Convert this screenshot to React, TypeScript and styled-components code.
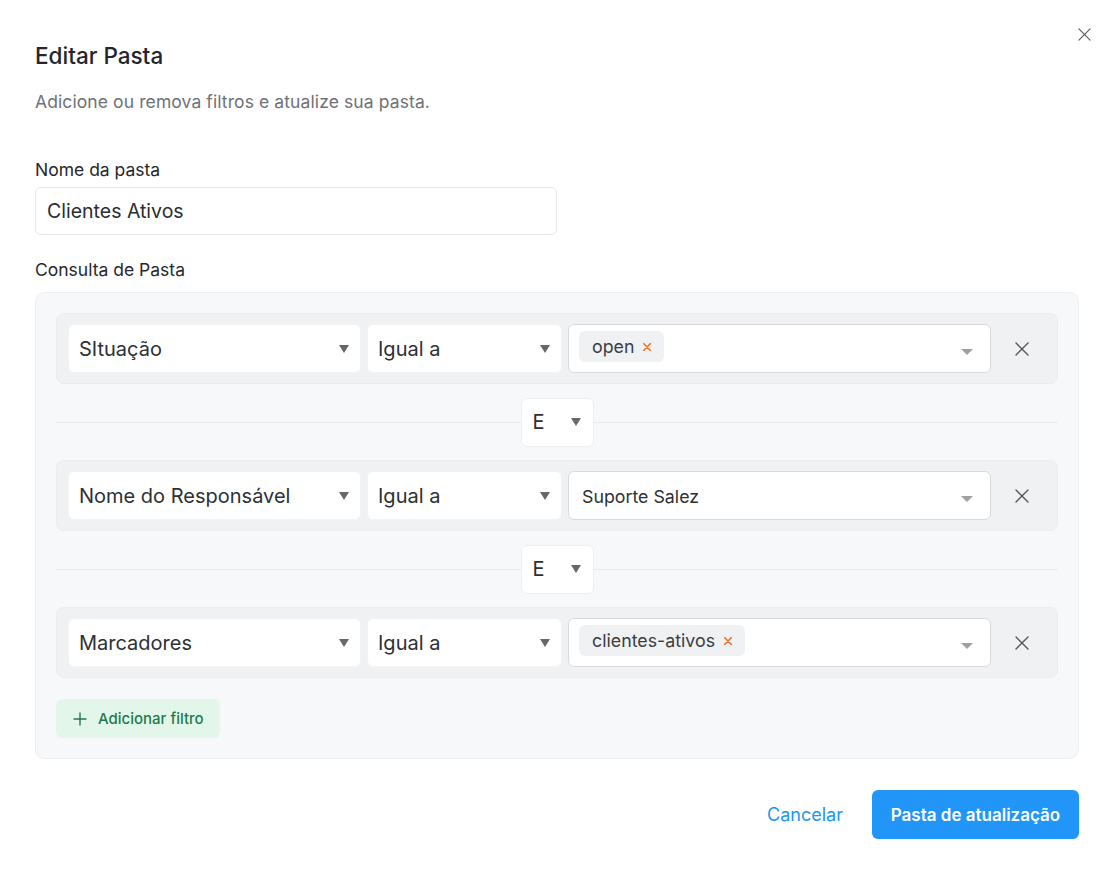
import React from 'react';
import styled, { createGlobalStyle } from 'styled-components';

const GlobalStyle = createGlobalStyle`
  * { box-sizing: border-box; }
  body {
    margin: 0;
    background: #ffffff;
    font-family: Inter, "Noto Sans", sans-serif;
    color: #25282c;
  }
`;

const Modal = styled.div`
  position: relative;
  width: 1117px;
  min-height: 886px;
  padding: 42px 38px 0 35px;
  background: #fff;
`;

const CloseButton = styled.button`
  position: absolute;
  top: 27px;
  right: 26px;
  width: 14px;
  height: 14px;
  padding: 0;
  border: none;
  background: none;
  display: flex;
  align-items: center;
  justify-content: center;
`;

const Title = styled.h2`
  margin: 0;
  font-size: 22.5px;
  line-height: 28px;
  font-weight: 500;
  color: #23262b;
`;

const Subtitle = styled.p`
  margin: 20px 0 0;
  font-size: 17.5px;
  line-height: 24px;
  color: #6e7178;
  letter-spacing: 0.1px;
`;

const Label = styled.label<{ $top: number }>`
  display: block;
  margin-top: ${p => p.$top}px;
  font-size: 17.5px;
  line-height: 24px;
  color: #25282c;
`;

const TextInput = styled.div`
  width: 50%;
  height: 48px;
  margin-top: 5px;
  border: 1px solid #e6e8eb;
  border-radius: 6px;
  padding: 0 11px;
  display: flex;
  align-items: center;
  font-size: 19.5px;
  color: #2a2d31;
`;

const QueryPanel = styled.div`
  margin-top: 10px;
  background: #f7f8fa;
  border: 1px solid #eceef1;
  border-radius: 10px;
  padding: 20px;
`;

const FilterRow = styled.div`
  height: 71px;
  padding: 0 11px;
  background: #f0f1f3;
  border: 1px solid #ebecef;
  border-radius: 8px;
  display: grid;
  grid-template-columns: 293px 195px 1fr 49px;
  column-gap: 6px;
  align-items: center;
`;

const Select = styled.div<{ $bordered?: boolean }>`
  height: 49px;
  background: #fff;
  border: 1px solid ${p => (p.$bordered ? '#d8dadd' : '#f2f3f5')};
  border-radius: 6px;
  padding: 0 11px 0 10px;
  display: flex;
  align-items: center;
  justify-content: space-between;
  font-size: 20px;
  color: #2d3035;
`;

const Caret = styled.span<{ $light?: boolean }>`
  width: 0;
  height: 0;
  border-left: ${p => (p.$light ? 6 : 5)}px solid transparent;
  border-right: ${p => (p.$light ? 6 : 5)}px solid transparent;
  border-top: ${p => (p.$light ? 6 : 8)}px solid ${p => (p.$light ? '#9ea0a4' : '#66686c')};
  flex-shrink: 0;
`;

const MultiSelect = styled(Select)`
  padding: 6px 17px 0 10px;
  align-items: flex-start;
  font-size: 17.8px;
`;

const Tags = styled.div`
  display: flex;
  gap: 6px;
  height: 31px;
  align-items: center;
`;

const Tag = styled.span`
  height: 31px;
  display: inline-flex;
  align-items: center;
  gap: 9px;
  padding: 0 13px 0 13px;
  background: #f0f1f3;
  border-radius: 6px;
  font-size: 17.8px;
  color: #3a3d42;
`;

const PlainValue = styled.span`
  height: 36px;
  display: flex;
  align-items: center;
  padding-left: 3px;
  font-size: 17.8px;
  color: #2d3035;
`;

const MultiCaret = styled.div`
  height: 41px;
  display: flex;
  align-items: center;
`;

const RemoveRow = styled.button`
  justify-self: center;
  width: 24px;
  height: 24px;
  padding: 0;
  border: none;
  background: none;
  display: flex;
  align-items: center;
  justify-content: center;
`;

const Conjunction = styled.div`
  height: 76px;
  display: flex;
  align-items: center;
  justify-content: center;
  position: relative;
  &::before {
    content: '';
    position: absolute;
    left: 0;
    right: 0;
    top: 38px;
    border-top: 1px solid #e8e9ec;
  }
`;

const ConjSelect = styled(Select)`
  position: relative;
  width: 73px;
  border-color: #eceef0;
  padding: 0 12px 0 11px;
`;

const AddButton = styled.button`
  margin-top: 21px;
  height: 39px;
  padding: 0 16px 0 17px;
  border: none;
  border-radius: 6px;
  background: #e2f7ea;
  color: #1f7a4c;
  font-family: Inter, sans-serif;
  font-size: 15px;
  font-weight: 500;
  display: inline-flex;
  align-items: center;
  gap: 11px;
`;

const Footer = styled.div`
  margin-top: 31px;
  display: flex;
  justify-content: flex-end;
  align-items: center;
  gap: 29px;
`;

const LinkButton = styled.button`
  border: none;
  background: none;
  padding: 0;
  color: #2196f3;
  font-family: Inter, sans-serif;
  font-size: 18px;
`;

const PrimaryButton = styled.button`
  width: 207px;
  height: 49px;
  border: none;
  border-radius: 6px;
  background: #2196f8;
  color: #fff;
  font-family: Inter, sans-serif;
  font-size: 17px;
  font-weight: 600;
`;

const XIcon = ({ size = 14, color = '#55585c', stroke = 1.4 }: { size?: number; color?: string; stroke?: number }) => (
  <svg width={size} height={size} viewBox="0 0 14 14" fill="none">
    <path d="M1 1L13 13M13 1L1 13" stroke={color} strokeWidth={stroke} strokeLinecap="round" />
  </svg>
);

type Filter = {
  field: string;
  op: string;
  tags?: string[];
  value?: string;
};

const filters: Filter[] = [
  { field: 'SItuação', op: 'Igual a', tags: ['open'] },
  { field: 'Nome do Responsável', op: 'Igual a', value: 'Suporte Salez' },
  { field: 'Marcadores', op: 'Igual a', tags: ['clientes-ativos'] },
];

const App = () => {
  return (
    <>
      <GlobalStyle />
      <Modal>
        <CloseButton type="button">
          <XIcon size={13} stroke={1.2} />
        </CloseButton>
        <Title>Editar Pasta</Title>
        <Subtitle>Adicione ou remova filtros e atualize sua pasta.</Subtitle>

        <Label $top={44}>Nome da pasta</Label>
        <TextInput>Clientes Ativos</TextInput>

        <Label $top={23}>Consulta de Pasta</Label>
        <QueryPanel>
          {filters.map((f, i) => (
            <React.Fragment key={f.field}>
              {i > 0 && (
                <Conjunction>
                  <ConjSelect>
                    E
                    <Caret />
                  </ConjSelect>
                </Conjunction>
              )}
              <FilterRow>
                <Select>
                  {f.field}
                  <Caret />
                </Select>
                <Select>
                  {f.op}
                  <Caret />
                </Select>
                <MultiSelect $bordered>
                  {f.tags ? (
                    <Tags>
                      {f.tags.map(t => (
                        <Tag key={t}>
                          {t}
                          <XIcon size={8} color="#f26b1f" stroke={2.6} />
                        </Tag>
                      ))}
                    </Tags>
                  ) : (
                    <PlainValue>{f.value}</PlainValue>
                  )}
                  <MultiCaret>
                    <Caret $light />
                  </MultiCaret>
                </MultiSelect>
                <RemoveRow type="button">
                  <XIcon size={14} />
                </RemoveRow>
              </FilterRow>
            </React.Fragment>
          ))}
          <AddButton type="button">
            <svg width="14" height="14" viewBox="0 0 14 14" fill="none">
              <path d="M7 1V13M1 7H13" stroke="#1f7a4c" strokeWidth="1.4" strokeLinecap="round" />
            </svg>
            Adicionar filtro
          </AddButton>
        </QueryPanel>

        <Footer>
          <LinkButton type="button">Cancelar</LinkButton>
          <PrimaryButton type="button">Pasta de atualização</PrimaryButton>
        </Footer>
      </Modal>
    </>
  );
};

export default App;
